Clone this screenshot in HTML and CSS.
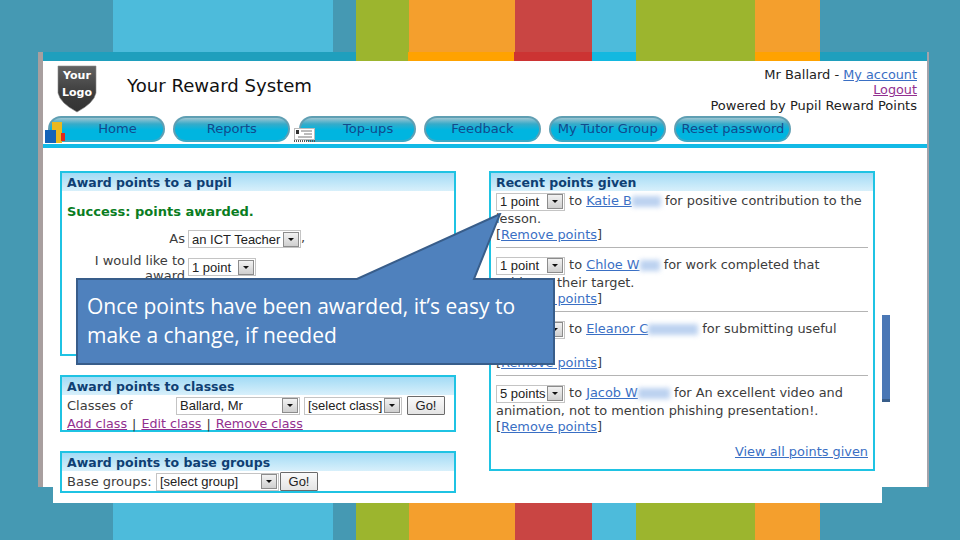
FILE: index.html
```html
<!DOCTYPE html>
<html lang="en">
<head>
<meta charset="utf-8">
<title>Your Reward System</title>
<link rel="stylesheet" href="styles.css">
</head>
<body>
<div class="slide">
  <div class="band band-top">
    <i class="s s-bg w113"></i><i class="s s-sky w220"></i><i class="s s-bg w23"></i><i class="s s-green w53"></i><i class="s s-orange w106"></i><i class="s s-red w77"></i><i class="s s-sky w44"></i><i class="s s-green w119"></i><i class="s s-orange w65"></i><i class="s s-bg w140"></i>
  </div>
  <div class="band band-bottom">
    <i class="s s-bg w113"></i><i class="s s-sky w220"></i><i class="s s-bg w23"></i><i class="s s-green w53"></i><i class="s s-orange w106"></i><i class="s s-red w77"></i><i class="s s-sky w44"></i><i class="s s-green w119"></i><i class="s s-orange w65"></i><i class="s s-bg w140"></i>
  </div>

  <div class="sheet"></div>

  <div class="window">
    <div class="colorbar">
      <i class="c c1"></i><i class="c c2"></i><i class="c c3"></i><i class="c c4"></i><i class="c c5"></i><i class="c c2 c6"></i><i class="c c3 c7"></i><i class="c c1 c8"></i>
    </div>

    <header class="header">
      <svg class="logo" width="40" height="48" viewBox="0 0 40 48">
        <defs><linearGradient id="lg" x1="0" y1="0" x2="0" y2="1"><stop offset="0" stop-color="#626262"/><stop offset="0.6" stop-color="#3c3c3c"/><stop offset="1" stop-color="#333"/></linearGradient></defs>
        <path d="M1 1H39V28Q37 38 20 47Q3 38 1 28Z" fill="url(#lg)" stroke="#8a8a8a" stroke-width="0.6"/>
        <text x="20" y="14" class="logo-text">Your</text>
        <text x="20" y="31" class="logo-text">Logo</text>
      </svg>
      <h1 class="title">Your Reward System</h1>
      <div class="account">
        <div>Mr Ballard - <a class="link" href="#a">My account</a></div>
        <div><a class="visited" href="#l">Logout</a></div>
        <div>Powered by Pupil Reward Points</div>
      </div>
    </header>

    <nav class="nav">
      <a class="pill pill-icon" href="#h">Home</a>
      <a class="pill" href="#r">Reports</a>
      <a class="pill pill-icon" href="#t">Top-ups</a>
      <a class="pill" href="#f">Feedback</a>
      <a class="pill" href="#m">My Tutor Group</a>
      <a class="pill" href="#p">Reset password</a>
    </nav>
    <div class="navline"></div>

    <main class="columns">
      <div class="col-left">
        <section class="panel panel-pupil">
          <h2 class="panel-head">Award points to a pupil</h2>
          <p class="success">Success: points awarded.</p>
          <div class="form-row">
            <span class="form-label">As</span>
            <span class="select sel-teacher"><span class="sel-text">an ICT Teacher</span><b class="arrow"></b></span><span>,</span>
          </div>
          <div class="form-row form-row-2">
            <span class="form-label">I would like to award</span>
            <span class="select sel-point"><span class="sel-text">1 point</span><b class="arrow"></b></span>
          </div>
        </section>

        <section class="panel panel-classes">
          <h2 class="panel-head">Award points to classes</h2>
          <div class="inline-row">
            <span class="inline-label">Classes of</span>
            <span class="select sel-ballard"><span class="sel-text">Ballard, Mr</span><b class="arrow"></b></span>
            <span class="select sel-class"><span class="sel-text">[select class]</span><b class="arrow"></b></span>
            <button class="go go-class">Go!</button>
          </div>
          <div class="class-links"><a class="visited" href="#ac">Add class</a><span class="sep">|</span><a class="visited" href="#ec">Edit class</a><span class="sep">|</span><a class="visited" href="#rc">Remove class</a></div>
        </section>

        <section class="panel panel-groups">
          <h2 class="panel-head">Award points to base groups</h2>
          <div class="inline-row">
            <span class="inline-label">Base groups:</span>
            <span class="select sel-group"><span class="sel-text">[select group]</span><b class="arrow"></b></span>
            <button class="go go-group">Go!</button>
          </div>
        </section>
      </div>

      <section class="panel panel-recent">
        <h2 class="panel-head">Recent points given</h2>
        <div class="entry">
          <div class="entry-line"><span class="select sel-entry"><span class="sel-text">1 point</span><b class="arrow"></b></span> to <a class="link" href="#1">Katie B</a><span class="smudge sm-a"></span> for positive contribution to the</div>
          <div class="entry-line">lesson.</div>
          <div class="entry-remove">[<a class="link" href="#r1">Remove points</a>]</div>
        </div>
        <div class="entry">
          <div class="entry-line"><span class="select sel-entry"><span class="sel-text">1 point</span><b class="arrow"></b></span> to <a class="link" href="#2">Chloe W</a><span class="smudge sm-b"></span> for work completed that</div>
          <div class="entry-line">achieves their target.</div>
          <div class="entry-remove">[<a class="link" href="#r2">Remove points</a>]</div>
        </div>
        <div class="entry">
          <div class="entry-line"><span class="select sel-entry"><span class="sel-text">1 point</span><b class="arrow"></b></span> to <a class="link" href="#3">Eleanor C</a><span class="smudge sm-c"></span> for submitting useful</div>
          <div class="entry-line">work.</div>
          <div class="entry-remove">[<a class="link" href="#r3">Remove points</a>]</div>
        </div>
        <div class="entry entry-last">
          <div class="entry-line"><span class="select sel-entry"><span class="sel-text">5 points</span><b class="arrow"></b></span> to <a class="link" href="#4">Jacob W</a><span class="smudge sm-d"></span> for An excellent video and</div>
          <div class="entry-line">animation, not to mention phishing presentation!.</div>
          <div class="entry-remove">[<a class="link" href="#r4">Remove points</a>]</div>
        </div>
        <div class="view-all"><a class="link" href="#all">View all points given</a></div>
      </section>
    </main>
  </div>

  <svg class="icon-home" width="22" height="24" viewBox="0 0 22 24">
    <rect x="8" y="2" width="10" height="21" fill="#eab81e"/>
    <rect x="17" y="13" width="4" height="8" fill="#e02a1c"/>
    <rect x="1" y="10" width="11" height="13" fill="#1463b8"/>
  </svg>
  <svg class="icon-card" width="22" height="15" viewBox="0 0 22 15">
    <rect x="0.5" y="0.5" width="20" height="11" fill="#fff" stroke="#bbb"/>
    <rect x="2" y="2" width="3" height="4" fill="#333"/>
    <path d="M7 3H18M10 6H18M4 9H18" stroke="#777" stroke-width="1"/>
    <path d="M0 13H21" stroke="#555" stroke-width="2" stroke-dasharray="1 1"/>
  </svg>

  <div class="sliver"></div>

  <div class="callout">
    <svg class="callout-shape" width="480" height="154" viewBox="0 0 480 154">
      <path d="M1 66H281L424 1L398 66H478V151H1Z" fill="#4f81bd" stroke="#385d8a" stroke-width="2"/>
    </svg>
    <p class="callout-text">Once points have been awarded, it’s easy to make a change, if needed</p>
  </div>
</div>
</body>
</html>
```

FILE: styles.css
```css
* { box-sizing: border-box; }
html, body { margin: 0; padding: 0; }
body { width: 960px; height: 540px; overflow: hidden; font-family: "DejaVu Sans", sans-serif; }

.slide { position: relative; width: 960px; height: 540px; background: #4599b3; display: flex; flex-direction: column; justify-content: space-between; overflow: hidden; }
.band { display: flex; }
.band-top { height: 61px; }
.band-bottom { height: 37px; }
.s { display: block; height: 100%; }
.s-bg { background: #4599b3; }
.s-sky { background: #4dbbdb; }
.s-green { background: #9cb52e; }
.s-orange { background: #f49f2d; }
.s-red { background: #c94543; }
.w113 { width: 113px; } .w220 { width: 220px; } .w23 { width: 23px; } .w53 { width: 53px; }
.w106 { width: 106px; } .w77 { width: 77px; } .w44 { width: 44px; } .w119 { width: 119px; }
.w65 { width: 65px; } .w140 { width: 140px; }

.sheet { position: absolute; left: 53px; top: 480px; width: 829px; height: 23px; background: #fff; }

.window { position: absolute; left: 38px; top: 52px; width: 891px; height: 435px; background: #fff; border-left: 5px solid #a89f9f; border-right: 2px solid #a3a3ab; color: #3c3c3c; font-size: 13px; }
.colorbar { display: flex; height: 9px; }
.c { display: block; height: 100%; }
.c1 { width: 313px; background: #1f9fbd; }
.c2 { width: 52px; background: #9cb52e; }
.c3 { width: 106px; background: #ffa200; }
.c4 { width: 78px; background: #cc3333; }
.c5 { width: 44px; background: #13b8e0; }
.c6 { width: 119px; }
.c7 { width: 65px; }
.c8 { width: 107px; }

.header { display: flex; height: 55px; position: relative; padding: 4px 10px 0 14px; }
.logo { flex: none; }
.logo-text { font-family: "DejaVu Sans", sans-serif; font-weight: 700; font-size: 11px; fill: #fff; text-anchor: middle; }
.title { margin: 9px 0 0 30px; font-size: 18.1px; font-weight: 400; color: #111; line-height: 24px; flex: 1; }
.account { text-align: right; font-size: 13px; line-height: 15.4px; color: #222; padding-top: 2px; }
.account .link, .account .visited { font-size: 12.8px; }
.link { color: #3a6fc4; }
.visited { color: #92308f; }

.nav { display: flex; gap: 8.3px; padding: 0 0 0 5px; height: 26px; }
.pill { width: 117px; height: 26px; border-radius: 13px; border: 2px solid #5f9fb3; border-bottom-color: #3aa9c6; background: linear-gradient(#9ec6d2 0, #37abc9 6px, #00b5e0 12px, #00b5e0 100%); color: #124a8c; text-decoration: none; font-size: 13.1px; line-height: 21px; text-align: center; }
.pill-icon { padding-left: 22px; }
.navline { height: 4px; margin-top: 2px; background: #12bae6; }

.columns { display: flex; padding: 23px 0 0 17px; gap: 33px; align-items: flex-start; }
.col-left { width: 396px; display: flex; flex-direction: column; gap: 19px; }

.panel { border: 2px solid #1fc3e3; background: #fff; }
.panel-head { margin: 0; height: 18px; padding: 0 0 0 5px; font-size: 12.5px; line-height: 19px; font-weight: 700; color: #0f3f73; background: linear-gradient(#a3dbf5, #d8f0fb); }
.panel-pupil { height: 185px; }
.panel-classes { height: 57px; }
.panel-groups { height: 42px; }
.panel-recent { width: 386px; height: 300px; font-size: 12.9px; }

.success { margin: 13px 0 0 5px; font-size: 13px; line-height: 16px; font-weight: 700; color: #0a7d1f; }
.form-row { display: flex; align-items: flex-start; margin-top: 10px; }
.form-row-2 { margin-top: 4px; }
.form-label { width: 126px; text-align: right; padding-right: 3px; line-height: 15px; padding-top: 1px; flex: none; }

.select { display: inline-flex; align-items: center; justify-content: space-between; height: 18px; background: #fff; border: 1px solid #c4c4c4; font-family: "Liberation Sans", sans-serif; font-size: 13px; color: #222; padding: 0 1px 0 3px; vertical-align: middle; white-space: nowrap; flex: none; }
.arrow { position: relative; display: block; width: 16px; height: 15px; flex: none; background: linear-gradient(#f2f2f2, #cfcfcf); border: 1px solid #8c8c8c; }
.arrow::after { content: ""; position: absolute; left: 4px; top: 5px; border: 3px solid transparent; border-top: 3px solid #111; border-bottom: 0; }
.sel-teacher { width: 113px; }
.sel-point { width: 68px; }
.sel-ballard { width: 124px; }
.sel-class { width: 98px; }
.sel-group { width: 123px; }
.sel-entry { width: 69px; }
.form-row-2 .select { margin-top: 6px; }

.inline-row { display: flex; align-items: center; padding: 1px 0 0 5px; height: 20px; line-height: 18px; }
.inline-label { margin-right: 4px; }
.panel-classes .inline-label { width: 109px; margin-right: 0; }
.panel-groups .inline-label { width: 89px; margin-right: 0; }
.sel-class { margin-left: 4px; }
.go { font-family: "Liberation Sans", sans-serif; font-size: 13px; height: 19px; padding: 0; border: 1px solid #6b6b6b; border-radius: 1px; background: linear-gradient(#fafafa, #e4e4e4); color: #222; }
.go-class { width: 38px; margin-left: 5px; }
.go-group { width: 38px; margin-left: 1px; }
.class-links { padding-left: 5px; font-size: 12.7px; line-height: 17px; color: #333; }
.sep { margin: 0 5px; }

.entry { margin: 0 5px; padding: 0 0 5px; height: 64px; border-bottom: 1px solid #b4b4b4; }
.entry + .entry { padding-top: 7px; }
.panel-head + .entry { height: 57px; }
.entry-line { line-height: 18px; white-space: nowrap; }
.entry-line:first-child { padding-top: 1px; }
.entry-line:nth-child(2) { line-height: 16px; }
.entry-remove { line-height: 16px; }
.entry-last { border-bottom: 0; }
.smudge { display: inline-block; height: 11px; background: #bcd2f0; filter: blur(2.5px); vertical-align: -2px; }
.sm-a { width: 29px; }
.sm-b { width: 20px; }
.sm-c { width: 50px; }
.sm-d { width: 32px; }
.view-all { text-align: right; margin: 3px 5px 0 0; line-height: 17px; }

.icon-home { position: absolute; left: 44px; top: 120px; }
.icon-card { position: absolute; left: 294px; top: 128px; }
.sliver { position: absolute; left: 882px; top: 315px; width: 8px; height: 87px; background: #4a77b5; border-bottom: 3px solid #385d8a; }

.callout { position: absolute; left: 76px; top: 213px; width: 480px; height: 154px; }
.callout-shape { position: absolute; left: 0; top: 0; }
.callout-text { position: relative; margin: 0; padding: 79px 20px 0 11px; font-family: "Open Sans", sans-serif; font-weight: 500; font-size: 21px; line-height: 29px; color: #fff; }
```
